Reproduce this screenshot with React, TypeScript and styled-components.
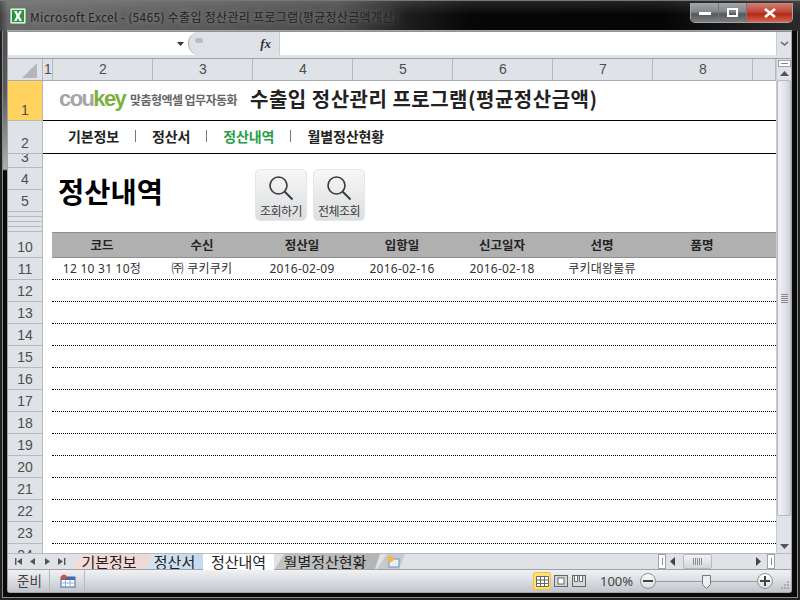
import React from "react";
import styled, { createGlobalStyle } from "styled-components";

const Global = createGlobalStyle`
  html, body { margin: 0; padding: 0; width: 800px; height: 600px; overflow: hidden; background: #111; }
  * { box-sizing: border-box; }
`;

const KR = `"Noto Sans CJK KR", "Noto Sans", sans-serif`;
const UI = `"Noto Sans", "Noto Sans CJK KR", sans-serif`;

const Win = styled.div`
  width: 800px; height: 600px; display: flex; flex-direction: column;
  background:
    linear-gradient(180deg, #4a4a4a 0, #5a5a5a 90px, #b0b0b0 168px, #0a0a0a 170px) left top / 8px 100% no-repeat,
    #0a0a0a;
  box-shadow: inset 0 0 0 2px #222, inset 0 0 0 3px #8a8a8a;
  border-top: 1px solid #777;
  font-family: ${KR};
  overflow: hidden;
`;
const TitleBar = styled.div`
  height: 30px; flex: none; display: flex; align-items: flex-start; padding: 1px 8px 0 10px;
  background:
    linear-gradient(180deg, rgba(255,255,255,.12), rgba(255,255,255,0) 45%),
    linear-gradient(90deg, #3f3f3f 0, #6a6a6a 8px, #5c5c5c 180px, #4a4a4a 340px, #1c1c1c 410px, #070707 470px, #050505 660px, #2a2a2a 800px);
`;
const AppIcon = styled.svg` width: 16px; height: 16px; margin: 6px 4px 0 0; flex: none; `;
const TitleText = styled.div`
  font: 12px/28px ${KR}; color: #222; margin-top: 1px; white-space: nowrap; letter-spacing: .3px;
  text-shadow: 0 0 6px rgba(255,255,255,.45);
  flex: 1;
`;
const Ctrls = styled.div`
  display: flex; height: 20px; margin: 1px -1px 0 0; border: 1px solid #a5a5a5; border-top: 0; border-radius: 0 0 5px 5px; overflow: hidden;
`;
const Ctrl = styled.div<{ $w: number; $close?: boolean }>`
  width: ${p => p.$w}px; display: flex; align-items: center; justify-content: center;
  border-left: 1px solid #777;
  background: ${p => p.$close
    ? "linear-gradient(180deg,#cf8278 0,#c04a3a 45%,#b32a18 58%,#d4664c 100%)"
    : "linear-gradient(180deg,#a3a5a6 0,#85888a 45%,#55585a 58%,#7d8082 100%)"};
  &:first-child { border-left: 0; }
`;
const Inner = styled.div`
  margin: 0 9px 0 8px; flex: 1; min-height: 0; display: flex; flex-direction: column; background: #dfe2e7;
  box-shadow: 0 0 0 1px #a5a5a5; border-radius: 0 0 2px 2px;
`;
const FormulaBar = styled.div`
  height: 24px; flex: none; display: flex; background: #fff; border-top: 1px solid #8e9299;
`;
const NameBox = styled.div`
  width: 180px; display: flex; align-items: center; justify-content: flex-end; padding-right: 3px;
`;
const FxPill = styled.div`
  width: 91px; background: #dee1e6; border-radius: 12px 0 0 12px; border-left: 1px solid #a9adb3;
  display: flex; align-items: center; justify-content: space-between; padding: 0 8px 0 6px;
`;
const PillDot = styled.div` width: 8px; height: 5px; border-radius: 4px; background: #b9bcc2; margin-bottom: 6px; `;
const Fx = styled.span` font: italic bold 13px "Liberation Serif", serif; color: #333; `;
const FormulaInput = styled.div` flex: 1; background: #fff; border-left: 1px solid #c8cbd0; `;
const ExpandBtn = styled.div`
  width: 15px; background: #dfe2e7; border-left: 1px solid #c8cbd0; display: flex; align-items: center; justify-content: center;
`;
const GapBar = styled.div` height: 4px; flex: none; background: #dfe2e7; border-bottom: 1px solid #9ea2a8; `;

const SheetArea = styled.div` flex: 1; min-height: 0; display: flex; `;
const SheetMain = styled.div` width: 768px; display: flex; flex-direction: column; background: #fff; overflow: hidden; `;
const ColHeads = styled.div` height: 22px; flex: none; display: flex; background: #dfe2e7; border-bottom: 1px solid #a9adb3; `;
const Corner = styled.div`
  width: 35px; flex: none; border-right: 1px solid #b6b9bf; display: flex; justify-content: flex-end; align-items: flex-end; padding: 0 5px 2px 0;
`;
const CornerTri = styled.div`
  width: 0; height: 0; border-style: solid; border-width: 0 0 15px 15px; border-color: transparent transparent #b3b6bb transparent;
`;
const ColHead = styled.div<{ $w: number }>`
  width: ${p => p.$w}px; flex: none; text-align: center; border-right: 1px solid #b6b9bf; padding-left: 1px;
  font: 14px/21px "Liberation Sans", sans-serif; color: #4e4e4e;
`;
const Body = styled.div` flex: 1; min-height: 0; display: flex; overflow: hidden; `;
const RowHeads = styled.div` width: 35px; flex: none; display: flex; flex-direction: column; background: #dfe2e7; border-right: 1px solid #b6b9bf; `;
const RowHead = styled.div<{ $h: number; $sel?: boolean }>`
  height: ${p => p.$h}px; flex: none; border-bottom: 1px solid #b6b9bf; overflow: hidden;
  background: ${p => p.$sel ? "#ffd35e" : "#dfe2e7"};
  font: 14px/1 "Liberation Sans", sans-serif; color: #4e4e4e; text-align: center;
  display: flex; align-items: flex-end; justify-content: center; padding-bottom: 3px;
`;
const Content = styled.div` flex: 1; min-width: 0; display: flex; flex-direction: column; `;
const Brand = styled.div`
  height: 40px; flex: none; border-bottom: 1px solid #000; display: flex; align-items: center; padding: 0 0 3px 16px;
`;
const Logo = styled.div` font: bold 22px/1 "Liberation Sans", sans-serif; color: #a5a5a5; letter-spacing: -1.6px; width: 71px; `;
const LogoKey = styled.span` color: #7db13d; `;
const Slogan = styled.div` font: bold 12px/1 ${KR}; color: #666; letter-spacing: -.55px; width: 120px; padding-top: 2px; white-space: nowrap; `;
const MainTitle = styled.div` font: bold 20px/1 ${KR}; color: #222; white-space: nowrap; letter-spacing: .5px; `;
const Nav = styled.div`
  height: 33px; flex: none; border-bottom: 1px solid #000; display: flex; align-items: center; padding: 0 0 0 25px; gap: 16px;
`;
const NavItem = styled.div<{ $on?: boolean }>` font: bold 14px/1 ${KR}; letter-spacing: -.12px; color: ${p => p.$on ? "#27a04a" : "#222"}; padding-bottom: 3px; `;
const NavSep = styled.div` width: 1px; height: 12px; background: #777; margin-bottom: 3px; `;
const Toolbar = styled.div` height: 78px; flex: none; display: flex; padding: 15px 0 0 15px; `;
const PageTitle = styled.div` width: 197px; font: bold 28.5px/44px ${KR}; color: #000; `;
const Btns = styled.div` display: flex; gap: 6px; `;
const Btn = styled.div`
  width: 52px; height: 52px; border-radius: 5px; border: 1px solid #e6e6e6;
  background: linear-gradient(180deg,#f7f7f7,#dcdee0);
  display: flex; flex-direction: column; align-items: center; padding-top: 5px;
`;
const BtnLabel = styled.div` font: 12px/1 ${KR}; color: #3a3a3a; letter-spacing: -.6px; margin-top: 2px; white-space: nowrap; `;
const Grid = styled.div`
  display: grid; grid-template-columns: 0 repeat(7, 100px) 1fr; flex: none; margin-left: 9px;
`;
const HeadRow = styled(Grid)`
  height: 26px; background: #b0b0b0; border-top: 1px solid #8f8f8f; border-bottom: 1px solid #8f8f8f; font: bold 12.5px/24px ${KR}; color: #222;
`;
const DataRow = styled(Grid)`
  height: 22px; border-bottom: 1px dotted #000; font: 12px/22px ${UI}; color: #333; letter-spacing: .25px;
`;
const Cell = styled.div` text-align: center; white-space: nowrap; `;
const VScroll = styled.div`
  width: 15px; flex: none; display: flex; flex-direction: column; align-items: center; background: #dfe2e7; border-left: 1px solid #c8cbd0;
`;
const SplitBox = styled.div`
  width: 13px; height: 7px; margin: 1px 0 0; background: #fff; border: 1px solid #9ea2a8; display: flex; align-items: center; justify-content: center;
`;
const SplitDash = styled.div` width: 7px; height: 1px; background: #888; `;
const ScrollArrow = styled.div` height: 13px; display: flex; align-items: center; justify-content: center; flex: none; `;
const VThumb = styled.div`
  width: 14px; flex: none; height: 436px; background: linear-gradient(90deg,#f2f3f5,#dfe2e7 60%,#cfd2d7);
  border: 1px solid #b6b9bf; border-radius: 2px; display: flex; align-items: center; justify-content: center;
`;
const VSpacer = styled.div` flex: 1; `;
const TabBar = styled.div`
  height: 17px; flex: none; display: flex; align-items: stretch; background: #dfe2e7; border-top: 1px solid #b6b9bf; border-bottom: 1px solid #9ea2a8;
`;
const TabNav = styled.div` width: 60px; flex: none; display: flex; align-items: center; justify-content: space-between; padding: 0 2px 0 6px; margin-right: 4px; `;
const Tab = styled.div<{ $w: number; $bg: string; $active?: boolean }>`
  width: ${p => p.$w + 5}px; flex: none; margin-right: -5px; padding-right: 5px; text-align: center; color: #222; background: ${p => p.$bg};
  font: 15px/15px ${KR}; white-space: nowrap;
  clip-path: polygon(0 100%, 9px 0, 100% 0, calc(100% - 5px) 100%);
  ${p => p.$active ? "position: relative; z-index: 1; width: 71px; margin: 0 1px 0 0; padding: 0; clip-path: none; height: 16px;" : ""}
`;
const NewTab = styled.div`
  width: 28px; margin-left: 2px; flex: none; background: #c6c9ce; clip-path: polygon(0 100%, 10px 0, 100% 0, calc(100% - 6px) 100%);
  display: flex; align-items: center; justify-content: center; padding-left: 5px;
`;
const TabSpacer = styled.div` flex: 1; `;
const HScroll = styled.div` flex: none; display: flex; align-items: center; margin-right: 16px; `;
const Handle = styled.div`
  width: 8px; height: 15px; flex: none; background: #fff; border: 1px solid #9ea2a8; display: flex; align-items: center; justify-content: center;
`;
const HandleGap = styled(Handle)<{ $l: number; $r: number }>` margin: 0 ${p => p.$r}px 0 ${p => p.$l}px; `;
const HandleDash = styled.div` width: 1px; height: 7px; background: #888; `;
const HThumb = styled.div`
  width: 29px; height: 15px; flex: none; margin: 0 42px 0 6px; background: linear-gradient(180deg,#f2f3f5,#d3d6da);
  border: 1px solid #b6b9bf; border-radius: 2px; display: flex; align-items: center; justify-content: center;
`;
const GripLines = styled.div`
  width: 9px; height: 7px; background: repeating-linear-gradient(90deg,#8a8a8a 0 1px,transparent 1px 2px);
`;
const GripLinesV = styled(GripLines)` transform: rotate(90deg); `;
const Status = styled.div`
  height: 22px; flex: none; display: flex; align-items: center; background: linear-gradient(180deg,#f0f1f3,#dfe1e5 40%,#c2c5cb);
  font: 13.5px/1 ${KR}; color: #444;
`;
const StatusCell = styled.div<{ $w: number }>`
  width: ${p => p.$w}px; height: 100%; flex: none; display: flex; align-items: center; justify-content: center; border-right: 1px solid #b6b9bf; padding-left: 2px;
`;
const StatusSpacer = styled.div` flex: 1; `;
const ViewBtn = styled.div<{ $on?: boolean }>`
  width: ${p => p.$on ? 18 : 17}px; height: 18px; margin-right: 1px; display: flex; align-items: center; justify-content: center; border-radius: 2px;
  ${p => p.$on ? "background: #ffe36e; border: 1px solid #eec24a;" : ""}
`;
const Pct = styled.div` font: 13px/1 ${UI}; color: #444; margin: 0 8px 0 12px; width: 32px; text-align: center; `;
const RoundBtn = styled.div`
  width: 16px; height: 16px; border-radius: 50%; flex: none; border: 1px solid #8f9399; background: linear-gradient(180deg,#fff,#d9dbdf);
  display: flex; align-items: center; justify-content: center;
`;
const Slider = styled.div` width: 101px; height: 1px; background: #9a9da2; display: flex; justify-content: center; overflow: visible; `;
const SliderThumb = styled.svg` width: 9px; height: 14px; margin-top: -6px; flex: none; `;
const Grip = styled.svg` width: 11px; height: 11px; margin: 8px 1px 0 6px; flex: none; `;
const BottomFrame = styled.div` height: 8px; flex: none; `;

const cols = [["1", 10], ["2", 100], ["3", 100], ["4", 100], ["5", 100], ["6", 100], ["7", 100], ["8", 100], ["", 23]] as const;
const rowHeads: [string, number, boolean?][] = [
  ["1", 40, true], ["2", 33], ["3", 14], ["4", 22], ["5", 22], ["", 5], ["", 5], ["", 5], ["", 5], ["10", 26],
  ...Array.from({ length: 13 }, (_, i) => [String(11 + i), 22] as [string, number]),
  ["24", 22],
];
const heads = ["코드", "수신", "정산일", "입항일", "신고일자", "선명", "품명"];
const first = ["12 10 31 10정", "㈜ 쿠키쿠키", "2016-02-09", "2016-02-16", "2016-02-18", "쿠키대왕물류", ""];

const Tri = ({ d, c = "#555" }: { d: string; c?: string }) => (
  <svg width="9" height="9" viewBox="0 0 9 9"><path d={d} fill={c} /></svg>
);
const Search = () => (
  <svg width="28" height="28" viewBox="0 0 28 28" fill="none" stroke="#3a3a3a">
    <circle cx="11.5" cy="10.5" r="8.5" strokeWidth="1.6" />
    <path d="M17.5 16.5 L25.5 24.5" strokeWidth="2" />
  </svg>
);

export default function App() {
  return (
    <Win>
      <Global />
      <TitleBar>
        <AppIcon viewBox="0 0 16 16">
          <rect x=".5" y=".5" width="15" height="15" rx="1" fill="#dff0dc" stroke="#9cc79a" />
          <rect x="2" y="2" width="12" height="12" fill="#2f8f45" />
          <path d="M4 3h2.6L8 6l1.5-3H12L9.4 8 12 13H9.4L8 10l-1.5 3H4l2.6-5z" fill="#fff" />
        </AppIcon>
        <TitleText>Microsoft Excel - (5465) 수출입 정산관리 프로그램(평균정산금액계산)</TitleText>
        <Ctrls>
          <Ctrl $w={27}><svg width="12" height="7"><rect y="3" width="12" height="3" fill="#fff" /></svg></Ctrl>
          <Ctrl $w={28}><svg width="11" height="9"><rect x="1" y="1" width="9" height="7" fill="none" stroke="#fff" strokeWidth="2" /></svg></Ctrl>
          <Ctrl $w={46} $close><svg width="12" height="10" viewBox="0 0 12 10"><path d="M1 1l10 8M11 1L1 9" stroke="#fff" strokeWidth="2.6" /></svg></Ctrl>
        </Ctrls>
      </TitleBar>
      <Inner>
        <FormulaBar>
          <NameBox><Tri d="M1 3h7L4.5 7z" c="#333" /></NameBox>
          <FxPill><PillDot /><Fx>fx</Fx></FxPill>
          <FormulaInput />
          <ExpandBtn><svg width="9" height="6" viewBox="0 0 9 6"><path d="M1 1l3.5 3L8 1" fill="none" stroke="#666" strokeWidth="1.6" /></svg></ExpandBtn>
        </FormulaBar>
        <GapBar />
        <SheetArea>
          <SheetMain>
            <ColHeads>
              <Corner><CornerTri /></Corner>
              {cols.map(([l, w], i) => <ColHead key={i} $w={w}>{l}</ColHead>)}
            </ColHeads>
            <Body>
              <RowHeads>
                {rowHeads.map(([l, h, s], i) => <RowHead key={i} $h={h} $sel={s}>{l}</RowHead>)}
              </RowHeads>
              <Content>
                <Brand>
                  <Logo>cou<LogoKey>key</LogoKey></Logo>
                  <Slogan>맞춤형엑셀 업무자동화</Slogan>
                  <MainTitle>수출입 정산관리 프로그램(평균정산금액)</MainTitle>
                </Brand>
                <Nav>
                  <NavItem>기본정보</NavItem><NavSep />
                  <NavItem>정산서</NavItem><NavSep />
                  <NavItem $on>정산내역</NavItem><NavSep />
                  <NavItem>월별정산현황</NavItem>
                </Nav>
                <Toolbar>
                  <PageTitle>정산내역</PageTitle>
                  <Btns>
                    <Btn><Search /><BtnLabel>조회하기</BtnLabel></Btn>
                    <Btn><Search /><BtnLabel>전체조회</BtnLabel></Btn>
                  </Btns>
                </Toolbar>
                <HeadRow>
                  <span />
                  {heads.map(h => <Cell key={h}>{h}</Cell>)}
                </HeadRow>
                <DataRow>
                  <span />
                  {first.map((t, i) => <Cell key={i}>{t}</Cell>)}
                </DataRow>
                {Array.from({ length: 12 }, (_, i) => <DataRow key={i} />)}
              </Content>
            </Body>
          </SheetMain>
          <VScroll>
            <SplitBox><SplitDash /></SplitBox>
            <ScrollArrow><Tri d="M0 7h9L4.5 2z" /></ScrollArrow>
            <VThumb><GripLinesV /></VThumb>
            <VSpacer />
            <ScrollArrow><Tri d="M0 2h9L4.5 7z" /></ScrollArrow>
          </VScroll>
        </SheetArea>
        <TabBar>
          <TabNav>
            <Tri d="M1 1h1.4v7H1zM8 1v7L3 4.5z" />
            <Tri d="M7 1v7L2 4.5z" />
            <Tri d="M2 1v7l5-3.5z" />
            <Tri d="M7 1h1.4v7H7zM1 1v7l5-3.5z" />
          </TabNav>
          <Tab $w={74} $bg="linear-gradient(90deg,#f6dcd8,#f0d8d6)">기본정보</Tab>
          <Tab $w={57} $bg="linear-gradient(90deg,#d3e3f3,#c5daef)">정산서</Tab>
          <Tab $w={71} $bg="#fff" $active>정산내역</Tab>
          <Tab $w={100} $bg="linear-gradient(90deg,#c4c4c4,#b4b4b4)">월별정산현황</Tab>
          <NewTab>
            <svg width="16" height="13" viewBox="0 0 16 13">
              <rect x="3" y="4" width="10" height="8" fill="#e8eef6" stroke="#7a94b5" />
              <circle cx="4.5" cy="4" r="3" fill="#f5b93a" />
            </svg>
          </NewTab>
          <TabSpacer />
          <HScroll>
            <HandleGap $l={0} $r={2}><HandleDash /></HandleGap>
            <Tri d="M7 0v9L2 4.5z" c="#444" />
            <HThumb><GripLines /></HThumb>
            <Tri d="M2 0v9l5-4.5z" c="#444" />
            <HandleGap $l={4} $r={0}><HandleDash /></HandleGap>
          </HScroll>
        </TabBar>
        <Status>
          <StatusCell $w={42}>준비</StatusCell>
          <StatusCell $w={35}>
            <svg width="16" height="14" viewBox="0 0 16 14">
              <rect x="1" y="3" width="14" height="10" fill="#fff" stroke="#3e6fa8" />
              <rect x="1" y="3" width="14" height="3" fill="#3e6fa8" />
              <path d="M5.5 6v7M10 6v7M1 9h14" stroke="#8fb0d4" />
              <circle cx="4" cy="3" r="2.6" fill="#d9503a" />
            </svg>
          </StatusCell>
          <StatusSpacer />
          <ViewBtn $on>
            <svg width="13" height="11"><path d="M.5.5h12v10H.5zM.5 4h12M.5 7.5h12M4.5.5v10M8.5.5v10" fill="#fff" stroke="#666" /></svg>
          </ViewBtn>
          <ViewBtn>
            <svg width="14" height="12"><rect x=".5" y=".5" width="13" height="11" fill="#d4d6da" stroke="#666" /><rect x="4" y="3" width="6" height="6" fill="#fff" stroke="#666" /></svg>
          </ViewBtn>
          <ViewBtn>
            <svg width="14" height="12"><rect x=".5" y=".5" width="13" height="11" fill="#d4d6da" stroke="#666" /><path d="M2.5.5h3v6h-3zM7.5.5h3v6h-3z" fill="#fff" stroke="#666" /></svg>
          </ViewBtn>
          <Pct>100%</Pct>
          <RoundBtn><svg width="10" height="10"><rect y="4" width="10" height="2" fill="#444" /></svg></RoundBtn>
          <Slider>
            <SliderThumb viewBox="0 0 9 14"><path d="M.5.5h8v9l-4 4-4-4z" fill="#eceef0" stroke="#777" /></SliderThumb>
          </Slider>
          <RoundBtn><svg width="10" height="10"><path d="M0 4h10v2H0zM4 0h2v10H4z" fill="#444" /></svg></RoundBtn>
          <Grip viewBox="0 0 11 11"><path d="M8 1h2v2H8zM5 4h2v2H5zM8 4h2v2H8zM2 7h2v2H2zM5 7h2v2H5zM8 7h2v2H8z" fill="#aaadb2" /></Grip>
        </Status>
      </Inner>
      <BottomFrame />
    </Win>
  );
}
